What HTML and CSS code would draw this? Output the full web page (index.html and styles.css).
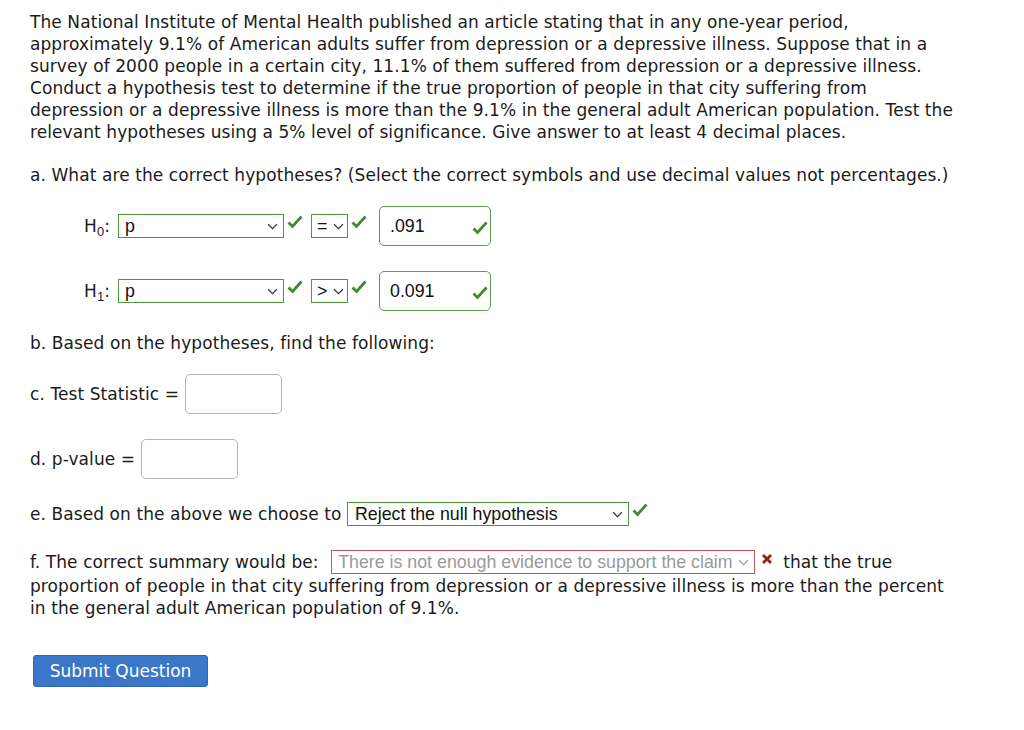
FILE: index.html
```html
<!DOCTYPE html>
<html>
<head>
<meta charset="utf-8">
<link rel="stylesheet" href="styles.css">
</head>
<body>
<div class="page">
  <p class="intro">The National Institute of Mental Health published an article stating that in any one-year period,<br>approximately 9.1% of American adults suffer from depression or a depressive illness. Suppose that in a<br>survey of 2000 people in a certain city, 11.1% of them suffered from depression or a depressive illness.<br>Conduct a hypothesis test to determine if the true proportion of people in that city suffering from<br>depression or a depressive illness is more than the 9.1% in the general adult American population. Test the<br>relevant hypotheses using a 5% level of significance. Give answer to at least 4 decimal places.</p>

  <p class="line q-a">a. What are the correct hypotheses? (Select the correct symbols and use decimal values not percentages.)</p>

  <div class="hrow h0">
    <span class="hlabel">H<sub>0</sub>:</span>
    <span class="sel sel-param ok">p<svg class="chev" viewBox="0 0 10 6"><path d="M1 1l4 4 4-4"/></svg></span>
    <svg class="check" viewBox="0 0 16 14"><path d="M1.5 7.5l4 4 9-10"/></svg>
    <span class="sel sel-op ok">=<svg class="chev" viewBox="0 0 10 6"><path d="M1 1l4 4 4-4"/></svg></span>
    <svg class="check" viewBox="0 0 16 14"><path d="M1.5 7.5l4 4 9-10"/></svg>
    <span class="ans ok">.091<svg class="check in" viewBox="0 0 16 14"><path d="M1.5 7.5l4 4 9-10"/></svg></span>
  </div>

  <div class="hrow h1">
    <span class="hlabel">H<sub>1</sub>:</span>
    <span class="sel sel-param ok">p<svg class="chev" viewBox="0 0 10 6"><path d="M1 1l4 4 4-4"/></svg></span>
    <svg class="check" viewBox="0 0 16 14"><path d="M1.5 7.5l4 4 9-10"/></svg>
    <span class="sel sel-op ok">&gt;<svg class="chev" viewBox="0 0 10 6"><path d="M1 1l4 4 4-4"/></svg></span>
    <svg class="check" viewBox="0 0 16 14"><path d="M1.5 7.5l4 4 9-10"/></svg>
    <span class="ans ok">0.091<svg class="check in" viewBox="0 0 16 14"><path d="M1.5 7.5l4 4 9-10"/></svg></span>
  </div>

  <p class="line q-b">b. Based on the hypotheses, find the following:</p>

  <div class="frow r-c">c. Test Statistic = <span class="blank"></span></div>
  <div class="frow r-d">d. p-value = <span class="blank"></span></div>

  <div class="erow">e. Based on the above we choose to <span class="sel sel-e ok">Reject the null hypothesis<svg class="chev" viewBox="0 0 10 6"><path d="M1 1l4 4 4-4"/></svg></span><svg class="check" viewBox="0 0 16 14"><path d="M1.5 7.5l4 4 9-10"/></svg></div>

  <div class="frow-f">f. The correct summary would be: <span class="sel sel-f bad">There is not enough evidence to support the claim<svg class="chev" viewBox="0 0 10 6"><path d="M1 1l4 4 4-4"/></svg></span><svg class="cross" viewBox="0 0 12 12"><path d="M2 2l8 8M10 2l-8 8"/></svg>that the true</div>
  <p class="fpara">proportion of people in that city suffering from depression or a depressive illness is more than the percent<br>in the general adult American population of 9.1%.</p>

  <button class="submit">Submit Question</button>
</div>
</body>
</html>
```

FILE: styles.css
```css
html, body {
  margin: 0;
  padding: 0;
  background: #fff;
}
body {
  font-family: "DejaVu Sans", Verdana, sans-serif;
  font-size: 17px;
  letter-spacing: 0.08px;
  color: #1b1b1b;
}
.page {
  padding: 11px 0 0 30px;
  display: flex;
  flex-direction: column;
  align-items: flex-start;
}
p { margin: 0; }
.intro, .line, .fpara {
  line-height: 22px;
  white-space: nowrap;
}
.q-a { margin-top: 21px; }
.hrow {
  display: flex;
  align-items: center;
  height: 40px;
  margin-left: 54px;
}
.h0 { margin-top: 20px; }
.h1 { margin-top: 25px; }
.hlabel {
  font-family: "DejaVu Sans", Verdana, sans-serif;
  font-size: 17px;
  width: 34px;
}
.hlabel sub {
  font-family: "Liberation Sans", Arial, sans-serif;
  font-size: 13px;
  vertical-align: -4px;
  line-height: 0;
}
.sel {
  display: inline-flex;
  align-items: center;
  justify-content: space-between;
  box-sizing: border-box;
  height: 24px;
  border: 1px solid #999;
  font-family: "Liberation Sans", Arial, sans-serif;
  font-size: 17.8px;
  letter-spacing: 0;
  color: #111;
  padding: 0 5px 0 6px;
  background: #fff;
}
.sel.ok { border-color: #4a9a3c; }
.sel.bad { border-color: #c05a5a; color: #9a9a9a; }
.chev {
  width: 11px;
  height: 7px;
  fill: none;
  stroke: #333;
  stroke-width: 1.1;
  flex: none;
}
.bad .chev { stroke: #999; }
.sel-param { width: 166px; }
.sel-op { width: 37px; margin-left: 8px; padding: 0 3px 0 5px; }
.check {
  width: 16px;
  height: 14px;
  fill: none;
  stroke: #3e8b2e;
  stroke-width: 2.8;
  margin-left: 3px;
  margin-top: -8px;
  flex: none;
}
.ans {
  display: inline-flex;
  align-items: center;
  justify-content: space-between;
  box-sizing: border-box;
  width: 112px;
  height: 40px;
  margin-left: 12px;
  border: 1.5px solid #5aa04c;
  border-radius: 5px;
  padding: 0 2px 0 10px;
  font-family: "Liberation Sans", Arial, sans-serif;
  font-size: 17.8px;
  letter-spacing: 0;
  color: #111;
}
.check.in { margin-top: 4px; margin-left: 0; }
.q-b { margin-top: 21px; }
.frow {
  display: flex;
  align-items: center;
  height: 40px;
  white-space: pre;
}
.r-c { margin-top: 20px; }
.r-d { margin-top: 25px; }
.blank {
  display: inline-block;
  box-sizing: border-box;
  width: 97px;
  height: 40px;
  border: 1px solid #b5b5b5;
  border-radius: 5px;
  margin-left: 0;
}
.erow {
  display: flex;
  align-items: center;
  height: 24px;
  margin-top: 23px;
  white-space: pre;
}
.sel-e { width: 282px; padding-left: 7px; }
.frow-f {
  display: flex;
  align-items: center;
  height: 24px;
  margin-top: 24px;
  white-space: pre;
}
.sel-f {
  width: 424px;
  margin-left: 7px;
  padding-left: 6px;
  white-space: nowrap;
}
.cross {
  width: 12px;
  height: 12px;
  fill: none;
  stroke: #a01a1a;
  stroke-width: 2.8;
  margin: -6px 10px 0 6px;
  flex: none;
}
.fpara { margin-top: 1px; }
.submit {
  margin-top: 36px;
  margin-left: 3px;
  box-sizing: border-box;
  width: 175px;
  height: 32px;
  background: #3a77c8;
  border: 1px solid #2f66b3;
  border-radius: 3px;
  color: #fff;
  font-family: "DejaVu Sans", Verdana, sans-serif;
  font-size: 17px;
  padding: 0;
}
```
